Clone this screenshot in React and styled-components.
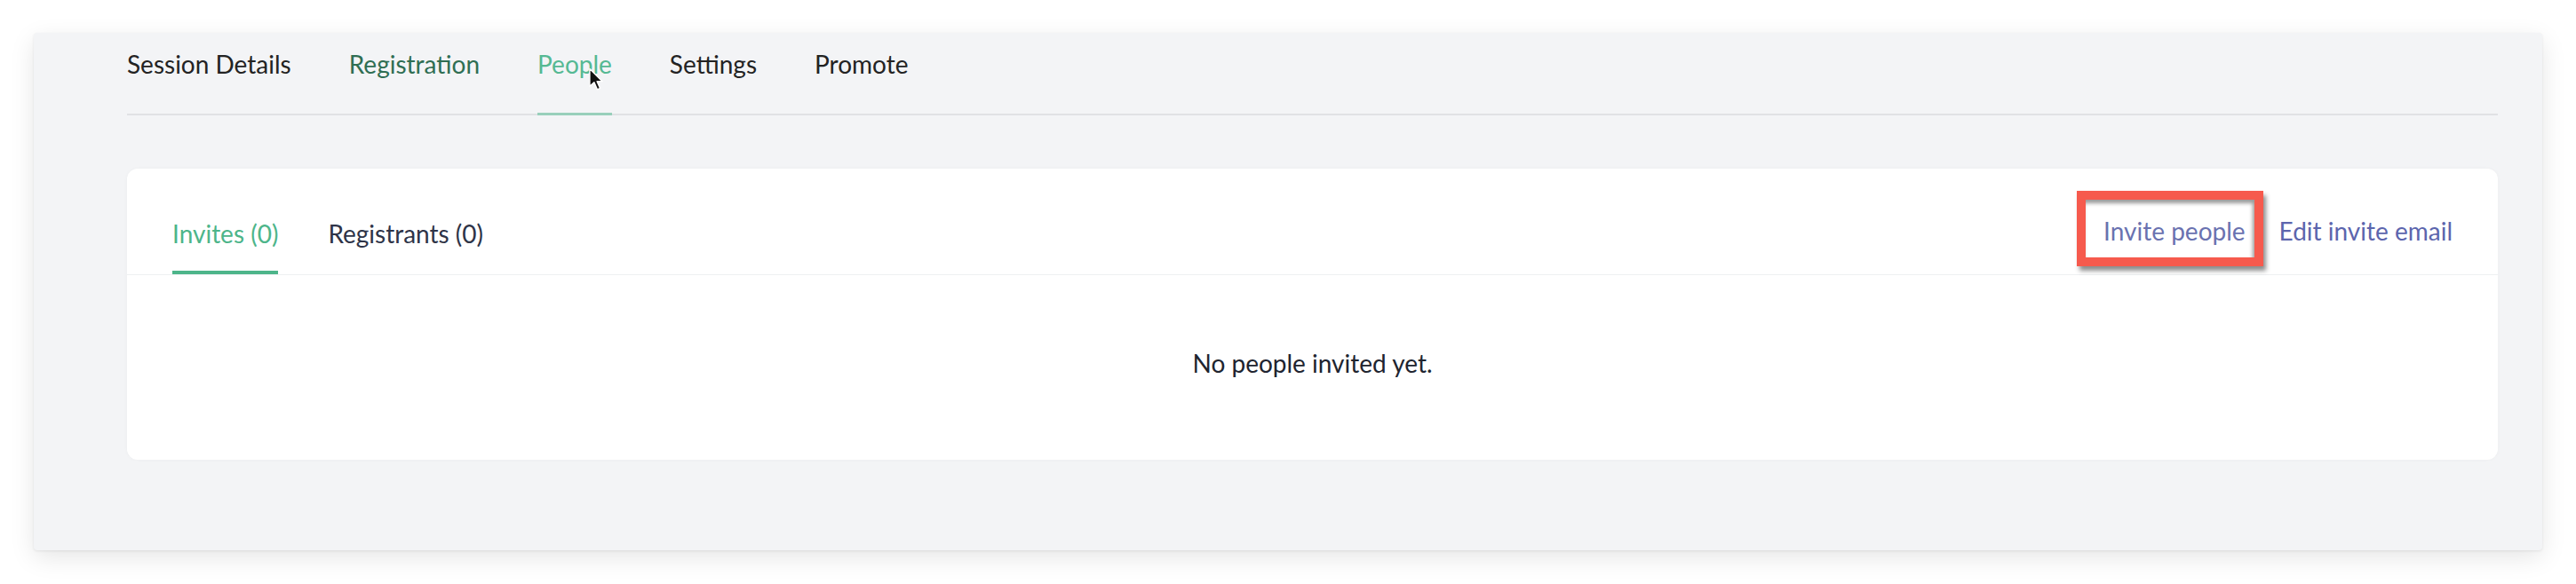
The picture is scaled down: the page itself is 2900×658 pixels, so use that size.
import React from "react";
import styled, { createGlobalStyle } from "styled-components";

const Global = createGlobalStyle`
  html, body { margin: 0; padding: 0; background: #ffffff; }
  body { font-family: Lato, "Open Sans", "Liberation Sans", sans-serif; -webkit-font-smoothing: antialiased; }
  * { box-sizing: border-box; }
`;

const Page = styled.div`
  padding: 37px 38px 38px 38px;
`;

const Panel = styled.section`
  background: #f3f4f6;
  border-radius: 4px;
  box-shadow: 0 1px 3px rgba(0, 0, 0, 0.08), 0 8px 28px rgba(0, 0, 0, 0.1);
  padding: 19px 50px 102px 105px;
`;

const TopTabs = styled.nav`
  display: flex;
  gap: 65px;
  box-shadow: inset 0 -2px 0 #e0e1e4;
`;

const TopTab = styled.span`
  position: relative;
  font-size: 28px;
  line-height: 32px;
  padding-bottom: 39px;
  border-bottom: 3px solid ${(p) => (p.$active ? "#98cfbb" : "transparent")};
  color: ${(p) => p.$color || "#232323"};
  white-space: nowrap;
`;

const Cursor = styled.svg`
  position: absolute;
  left: 57px;
  top: 20px;
  width: 18px;
  height: 27px;
`;

const Card = styled.div`
  margin-top: 60px;
  background: #ffffff;
  border-radius: 12px;
  box-shadow: 0 0 4px rgba(0, 0, 0, 0.03);
`;

const CardHeader = styled.div`
  display: flex;
  justify-content: space-between;
  align-items: flex-start;
  padding: 57px 51px 0 51px;
  border-bottom: 1px solid #eef0f2;
`;

const InnerTabs = styled.div`
  display: flex;
  gap: 56px;
`;

const InnerTab = styled.span`
  font-size: 28px;
  line-height: 32px;
  padding-bottom: 26px;
  border-bottom: 4px solid ${(p) => (p.$active ? "#4db58a" : "transparent")};
  color: ${(p) => (p.$active ? "#4db58a" : "#2e3448")};
  white-space: nowrap;
`;

const Actions = styled.div`
  display: flex;
  gap: 38px;
  margin-top: -3px;
`;

const ActionLink = styled.span`
  position: relative;
  font-size: 28px;
  line-height: 32px;
  color: ${(p) => p.$color || "#5c65ad"};
  white-space: nowrap;
`;

const Highlight = styled.span`
  position: absolute;
  left: -30px;
  right: -20px;
  top: -29px;
  bottom: -24px;
  border: 10px solid #f65a4d;
  box-shadow: 3px 5px 5px rgba(0, 0, 0, 0.45), inset -2px 4px 4px rgba(0, 0, 0, 0.4);
  pointer-events: none;
`;

const Empty = styled.div`
  padding: 83px 0 93px;
  text-align: center;
  font-size: 28px;
  line-height: 32px;
  color: #20242f;
`;

export default function App() {
  return (
    <>
      <Global />
      <Page>
        <Panel>
          <TopTabs>
            <TopTab>Session Details</TopTab>
            <TopTab $color="#2f6e53">Registration</TopTab>
            <TopTab $active $color="#55b993">
              People
              <Cursor viewBox="0 0 12 19">
                <path
                  d="M1 1 L1 15 L4.5 11.8 L7 17.5 L9.2 16.5 L6.8 11 L11 11 Z"
                  fill="#111"
                  stroke="#fff"
                  strokeWidth="1"
                  strokeLinejoin="round"
                />
              </Cursor>
            </TopTab>
            <TopTab>Settings</TopTab>
            <TopTab>Promote</TopTab>
          </TopTabs>

          <Card>
            <CardHeader>
              <InnerTabs>
                <InnerTab $active>Invites (0)</InnerTab>
                <InnerTab>Registrants (0)</InnerTab>
              </InnerTabs>
              <Actions>
                <ActionLink $color="#6a72b0">
                  Invite people
                  <Highlight />
                </ActionLink>
                <ActionLink>Edit invite email</ActionLink>
              </Actions>
            </CardHeader>
            <Empty>No people invited yet.</Empty>
          </Card>
        </Panel>
      </Page>
    </>
  );
}
